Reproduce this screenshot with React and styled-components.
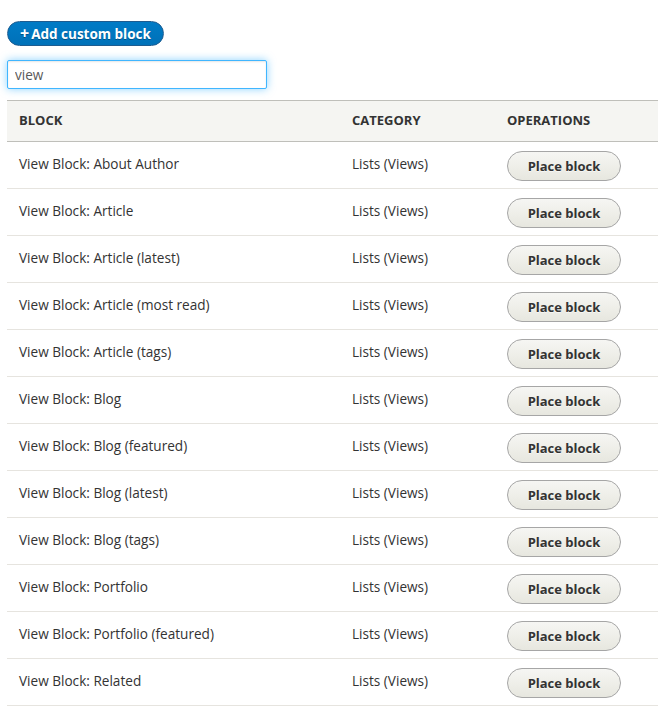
import React from "react";
import styled, { createGlobalStyle } from "styled-components";

const Global = createGlobalStyle`
  html, body { margin: 0; padding: 0; background: #fff; }
  body { font-family: "Open Sans", "Liberation Sans", sans-serif; color: #333; }
  * { box-sizing: border-box; }
`;

const Page = styled.div`
  padding: 21px 9px 0 7px;
  width: 667px;
`;

const AddButton = styled.button`
  display: inline-flex;
  align-items: center;
  height: 25px;
  width: 157px;
  padding: 0 0 0 12px;
  border: 1px solid #1e5c90;
  border-radius: 20em;
  background: linear-gradient(to bottom, #007bc6, #0071b8);
  color: #fff;
  font-family: inherit;
  font-weight: 700;
  font-size: 13.5px;
  text-shadow: 0 1px rgba(0,0,0,0.3);
  cursor: pointer;
  gap: 2px;
  white-space: nowrap;
`;

const Plus = styled.span`
  font-size: 16px;
  line-height: 1;
  margin-top: -2px;
`;

const Search = styled.input`
  display: block;
  margin-top: 14px;
  width: 260px;
  height: 29px;
  padding: 0 7px;
  border: 1px solid #40b6ff;
  border-radius: 2px;
  box-shadow: inset 0 1px 2px rgba(0,0,0,0.1), 0 0 8px rgba(64,182,255,0.6);
  font-family: inherit;
  font-size: 13.6px;
  color: #595959;
  outline: none;
`;

const Table = styled.table`
  margin-top: 11px;
  width: 651px;
  border-collapse: collapse;
  font-size: 13.6px;
`;

const HeadRow = styled.tr`
  background: #f5f5f2;
  border-top: 1px solid #bfbfba;
  border-bottom: 1px solid #bfbfba;
`;

const Th = styled.th`
  text-align: left;
  height: 41px;
  padding: 0 12px 2px;
  font-weight: 700;
  font-size: 13px;
  text-transform: uppercase;
  color: #333;
  width: ${p => p.$w || "auto"};
`;

const Row = styled.tr`
  border-bottom: 1px solid #e6e4df;
`;

const Td = styled.td`
  height: 47px;
  padding: 0 12px ${p => (p.$btn ? "0" : "3px")};
  color: #333;
  vertical-align: middle;
`;

const PlaceButton = styled.button`
  display: inline-flex;
  align-items: center;
  justify-content: center;
  width: 114px;
  height: 30px;
  margin-top: 2px;
  border: 1px solid #a6a6a6;
  border-radius: 20em;
  background: linear-gradient(to bottom, #f6f6f3, #e7e7df);
  color: #333;
  font-family: inherit;
  font-weight: 700;
  font-size: 13px;
  text-shadow: 0 1px hsla(0,0%,100%,0.6);
  cursor: pointer;
`;

const rows = [
  "About Author",
  "Article",
  "Article (latest)",
  "Article (most read)",
  "Article (tags)",
  "Blog",
  "Blog (featured)",
  "Blog (latest)",
  "Blog (tags)",
  "Portfolio",
  "Portfolio (featured)",
  "Related",
];

export default function App() {
  return (
    <>
      <Global />
      <Page>
        <AddButton><Plus>+</Plus>Add custom block</AddButton>
        <Search defaultValue="view" />
        <Table>
          <thead>
            <HeadRow>
              <Th $w="333px">Block</Th>
              <Th $w="155px">Category</Th>
              <Th>Operations</Th>
            </HeadRow>
          </thead>
          <tbody>
            {rows.map(r => (
              <Row key={r}>
                <Td>View Block: {r}</Td>
                <Td>Lists (Views)</Td>
                <Td $btn><PlaceButton>Place block</PlaceButton></Td>
              </Row>
            ))}
          </tbody>
        </Table>
      </Page>
    </>
  );
}
